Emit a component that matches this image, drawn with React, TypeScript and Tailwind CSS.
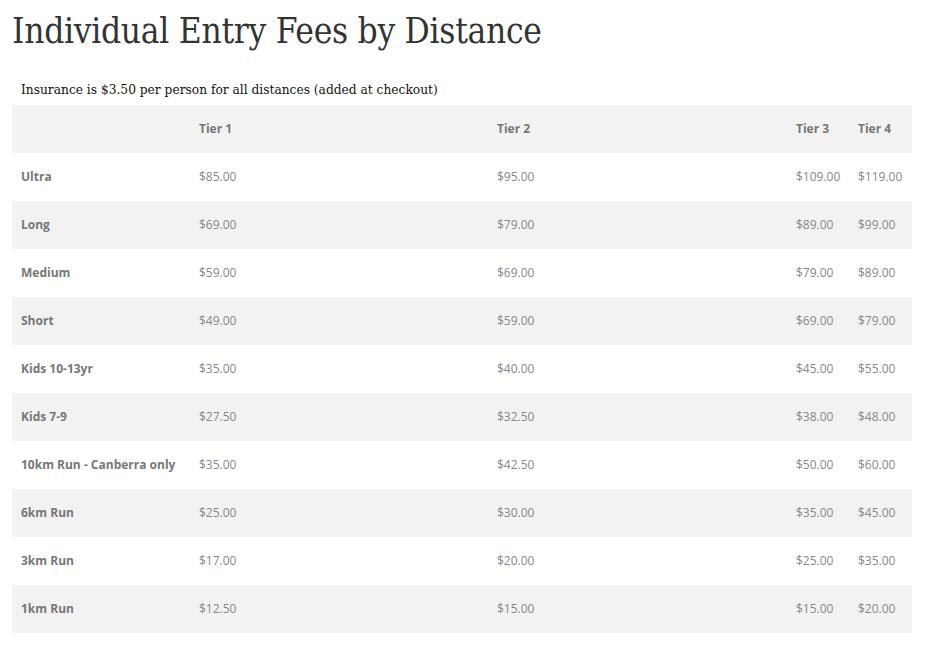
const rows: [string, string, string, string, string][] = [
  ["Ultra", "$85.00", "$95.00", "$109.00", "$119.00"],
  ["Long", "$69.00", "$79.00", "$89.00", "$99.00"],
  ["Medium", "$59.00", "$69.00", "$79.00", "$89.00"],
  ["Short", "$49.00", "$59.00", "$69.00", "$79.00"],
  ["Kids 10-13yr", "$35.00", "$40.00", "$45.00", "$55.00"],
  ["Kids 7-9", "$27.50", "$32.50", "$38.00", "$48.00"],
  ["10km Run - Canberra only", "$35.00", "$42.50", "$50.00", "$60.00"],
  ["6km Run", "$25.00", "$30.00", "$35.00", "$45.00"],
  ["3km Run", "$17.00", "$20.00", "$25.00", "$35.00"],
  ["1km Run", "$12.50", "$15.00", "$15.00", "$20.00"],
];

const cols = "grid grid-cols-[178px_298px_299px_62px_63px]";

export default function App() {
  return (
    <div className="min-h-[646px] bg-white px-3 pt-[9px]">
      <h1 className="font-['DejaVu_Serif',serif] font-stretch-condensed text-[35px] leading-[44px] tracking-[-0.3px] text-[#333]">
        Individual Entry Fees by Distance
      </h1>
      <p className="mt-[26px] pl-[9px] font-['DejaVu_Serif',serif] font-stretch-condensed text-[13.6px] leading-[20px] text-[#111]">
        Insurance is $3.50 per person for all distances (added at checkout)
      </p>
      <div className="mt-[6px] w-[900px] font-['Open_Sans',sans-serif] text-[12px]">
        <div className={`${cols} h-12 items-center bg-[#f2f2f2] font-bold text-[#777]`}>
          <div className="pl-[9px]"></div>
          <div className="pl-[9px]">Tier 1</div>
          <div className="pl-[9px]">Tier 2</div>
          <div className="pl-[9px]">Tier 3</div>
          <div className="pl-[9px]">Tier 4</div>
        </div>
        {rows.map((r, i) => (
          <div
            key={r[0]}
            className={`${cols} h-12 items-center ${i % 2 === 1 ? "bg-[#f2f2f2]" : "bg-white"} text-[#888]`}
          >
            <div className="pl-[9px] font-bold text-[#777]">{r[0]}</div>
            <div className="pl-[9px]">{r[1]}</div>
            <div className="pl-[9px]">{r[2]}</div>
            <div className="pl-[9px]">{r[3]}</div>
            <div className="pl-[9px]">{r[4]}</div>
          </div>
        ))}
      </div>
    </div>
  );
}
